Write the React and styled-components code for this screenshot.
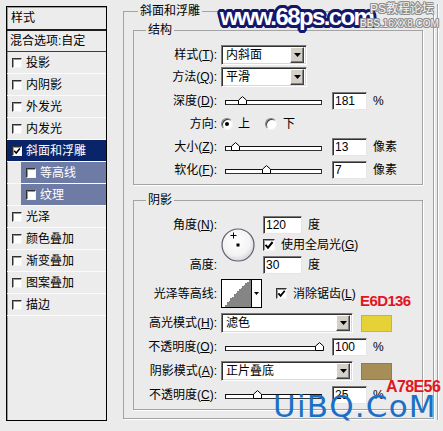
import React from 'react';
import styled, { createGlobalStyle } from 'styled-components';

const FONT = `"Liberation Sans", "Noto Sans CJK SC", sans-serif`;
const BG = '#ebebeb';

const ring = (r, color, steps = 16) =>
  Array.from({ length: steps }, (_, i) => {
    const a = (i / steps) * 2 * Math.PI;
    return `${(Math.cos(a) * r).toFixed(2)}px ${(Math.sin(a) * r).toFixed(2)}px 0 ${color}`;
  }).join(', ');

const GlobalStyle = createGlobalStyle`
  html, body { margin: 0; padding: 0; background: ${BG}; }
  body { font-family: ${FONT}; font-size: 12px; color: #000; }
  * { box-sizing: border-box; }
`;

const Page = styled.div`
  position: relative;
  width: 443px;
  height: 431px;
  overflow: hidden;
  background: ${BG};
  display: flex;
  align-items: flex-start;
  padding-left: 6px;
`;

/* ---------- left layer list ---------- */
const LayerList = styled.div`
  margin-top: 6px;
  width: 101px;
  height: 415px;
  border: 1px solid #000;
  box-shadow: inset 1px 1px 0 #9a9a9a;
  background: #ececec;
  display: flex;
  flex-direction: column;
`;

const ListHeader = styled.div`
  height: 24px;
  border-bottom: 2px solid #1e1e1e;
  display: flex;
  align-items: center;
  padding-left: 4px;
  line-height: 14px;
`;

const BlendRow = styled.div`
  height: 21px;
  border-bottom: 1px solid #3c3c3c;
  display: flex;
  align-items: center;
  padding-left: 3px;
  line-height: 14px;
`;

const LayerRow = styled.div`
  height: 22px;
  border-bottom: 1px solid #fbfbfb;
  display: flex;
  padding-left: ${(p) => (p.$sub ? 14 : 0)}px;
`;

const tones = {
  plain: { bg: 'transparent', fg: '#000' },
  selected: { bg: '#0a246a', fg: '#fff' },
  sub: { bg: '#6e7ba5', fg: '#fff' },
};

const RowBody = styled.div`
  flex: 1;
  display: flex;
  align-items: center;
  gap: 4px;
  padding-left: 5px;
  line-height: 14px;
  background: ${(p) => tones[p.$tone].bg};
  color: ${(p) => tones[p.$tone].fg};
`;

const Box = styled.span`
  flex: none;
  width: ${(p) => p.$size}px;
  height: ${(p) => p.$size}px;
  background: #fff;
  border: 1px solid;
  border-color: #303030 #f4f4f4 #f4f4f4 #303030;
  box-shadow: inset 1px 1px 0 #9a9a9a;
  display: flex;
  align-items: center;
  justify-content: center;
`;

const CheckBox = ({ size, checked }) => (
  <Box $size={size}>
    {checked && (
      <svg width={size - 2} height={size - 2} viewBox="0 0 10 10">
        <polyline points="1.5,4.8 4,7.6 8.6,2" fill="none" stroke="#000" strokeWidth="2" />
      </svg>
    )}
  </Box>
);

/* ---------- group boxes ---------- */
const Group = styled.fieldset`
  margin: 0;
  padding: 0;
  min-width: 0;
  border: 1px solid #a3a3a3;
  box-shadow: 1px 1px 0 #fff;
`;

const OuterGroup = styled(Group)`
  margin: 4px 0 0 16px;
  width: 311px;
  flex: none;
`;

const SpacedGroup = styled(Group)`
  margin-top: ${(p) => p.$mt}px;
`;

const Legend = styled.legend`
  padding: 0 2px;
  margin-left: ${(p) => p.$indent}px;
  line-height: 14px;
  font-size: 12px;
  background: ${BG};
`;

const GroupBody = styled.div`
  padding: ${(p) => p.$pad};
`;

const RightRule = styled.div`
  flex: none;
  margin: 4px 0 0 3px;
  width: 1px;
  height: 416px;
  background: #a3a3a3;
  box-shadow: 1px 0 0 #fff;
`;

/* ---------- form rows ---------- */
const FieldRow = styled.div`
  display: grid;
  grid-template-columns: 83px auto;
  column-gap: 4px;
  align-items: center;
  height: ${(p) => p.$h}px;
  margin-top: ${(p) => p.$mt || 0}px;
`;

const Label = styled.div`
  text-align: right;
  white-space: nowrap;
  line-height: 14px;
`;

const Controls = styled.div`
  display: flex;
  align-items: center;
  line-height: 14px;
  white-space: nowrap;
`;

const SelectBox = styled.div`
  width: ${(p) => p.$w}px;
  height: 20px;
  display: flex;
  align-items: center;
  justify-content: space-between;
  background: #fff;
  border: 1px solid;
  border-color: #7a7a7a #fff #fff #7a7a7a;
  box-shadow: inset 1px 1px 0 #303030, inset -1px -1px 0 #d8d8d8;
  padding: 1px 2px 1px 4px;
  line-height: 14px;
`;

const SelectButton = styled.span`
  width: 14px;
  height: 16px;
  background: #d4d0c8;
  border: 1px solid;
  border-color: #fff #404040 #404040 #fff;
  box-shadow: inset -1px -1px 0 #808080;
  display: flex;
  align-items: center;
  justify-content: center;
`;

const Select = ({ w, value }) => (
  <SelectBox $w={w}>
    <span>{value}</span>
    <SelectButton>
      <svg width="7" height="4" viewBox="0 0 7 4">
        <path d="M0 0h7L3.5 4z" fill="#000" />
      </svg>
    </SelectButton>
  </SelectBox>
);

const SliderWrap = styled.div`
  width: 105px;
  padding: 0 4px;
  flex: none;
`;

const Track = styled.div`
  position: relative;
  height: 5px;
  margin-top: 3px;
  border: 1px solid;
  border-color: #111 #333 #333 #111;
  background: #fff;
`;

const Thumb = styled.svg`
  position: absolute;
  top: -5px;
  width: 9px;
  height: 9px;
`;

const Slider = ({ pct }) => (
  <SliderWrap>
    <Track>
      <Thumb viewBox="0 0 9 9" style={{ left: `calc(${pct}% - 5px)` }}>
        <path d="M0.5 8.5V4.2L4.5 0.6L8.5 4.2V8.5Z" fill="#fff" stroke="#000" strokeWidth="1" />
      </Thumb>
    </Track>
  </SliderWrap>
);

const NumBox = styled.div`
  width: ${(p) => p.$w || 35}px;
  height: 18px;
  margin-left: ${(p) => (p.$ml === undefined ? 6 : p.$ml)}px;
  background: #fff;
  border: 1px solid;
  border-color: #7a7a7a #e6e6e6 #e6e6e6 #7a7a7a;
  box-shadow: inset 1px 1px 0 #303030;
  padding-left: 2px;
  line-height: 16px;
`;

const Unit = styled.span`
  margin-left: 6px;
`;

const RadioDot = styled.span`
  flex: none;
  width: 12px;
  height: 12px;
  border-radius: 50%;
  background: #fff;
  border: 1px solid;
  border-color: #808080 #f4f4f4 #f4f4f4 #808080;
  box-shadow: inset 1px 1px 0 #404040;
  display: flex;
  align-items: center;
  justify-content: center;
  margin-left: ${(p) => p.$ml || 0}px;
  &::after {
    content: '';
    width: 4px;
    height: 4px;
    border-radius: 50%;
    background: ${(p) => (p.$on ? '#000' : 'transparent')};
  }
`;

const OptText = styled.span`
  margin-left: ${(p) => p.$ml}px;
`;

const Swatch = styled.div`
  width: 31px;
  height: 17px;
  margin-left: 8px;
  background: ${(p) => p.$color};
  border: 1px solid rgba(0, 0, 0, 0.12);
`;

/* shadow angle block */
const AngleGrid = styled.div`
  display: grid;
  grid-template-columns: 83px 38px auto;
  grid-template-rows: repeat(3, 18px);
  column-gap: 4px;
  row-gap: 2px;
  align-items: center;
`;

const Cell = styled.div`
  grid-column: ${(p) => p.$col};
  grid-row: ${(p) => p.$row};
  display: flex;
  align-items: center;
  justify-content: ${(p) => (p.$right ? 'flex-end' : 'flex-start')};
  line-height: 14px;
  white-space: nowrap;
`;

const Contour = styled.div`
  width: 41px;
  height: 29px;
  border: 1px solid #000;
  background: #fff;
  display: flex;
`;

const ContourArrow = styled.div`
  width: 10px;
  border-left: 1px solid #000;
  display: flex;
  align-items: center;
  justify-content: center;
`;

/* overlays (watermarks / annotations drawn over the capture) */
const SiteMark = styled.div`
  position: absolute;
  left: 220px;
  top: 5px;
  font: bold 24px/24px "Liberation Sans", sans-serif;
  letter-spacing: -1.6px;
  color: #fff;
  text-shadow: ${ring(1.5, '#15176b')}, ${ring(2.8, '#15176b')};
`;

const ForumMark = styled.div`
  position: absolute;
  left: ${(p) => p.$x}px;
  top: ${(p) => p.$y}px;
  font-size: ${(p) => p.$size}px;
  line-height: 1.15;
  font-family: ${FONT};
  color: #f4f4f4;
  text-shadow: ${ring(1, '#8d8d8d', 8)};
  white-space: nowrap;
`;

const HexNote = styled.div`
  position: absolute;
  left: ${(p) => p.$x}px;
  top: ${(p) => p.$y}px;
  font: bold ${(p) => p.$size}px/1 "Liberation Sans", sans-serif;
  letter-spacing: -0.6px;
  color: #e2151f;
`;

const BlueMark = styled.div`
  position: absolute;
  left: 273px;
  top: 391px;
  font: 31px/1 "DejaVu Sans", sans-serif;
  letter-spacing: 1.2px;
  color: #1c6fc6;
`;

const layers = [
  { name: '投影' },
  { name: '内阴影' },
  { name: '外发光' },
  { name: '内发光' },
  { name: '斜面和浮雕', checked: true, tone: 'selected' },
  { name: '等高线', sub: true, tone: 'sub' },
  { name: '纹理', sub: true, tone: 'sub' },
  { name: '光泽' },
  { name: '颜色叠加' },
  { name: '渐变叠加' },
  { name: '图案叠加' },
  { name: '描边' },
];

export default function App() {
  return (
    <>
      <GlobalStyle />
      <Page>
        <LayerList>
          <ListHeader>样式</ListHeader>
          <BlendRow>混合选项:自定</BlendRow>
          {layers.map((l) => (
            <LayerRow key={l.name} $sub={l.sub}>
              <RowBody $tone={l.tone || 'plain'}>
                <CheckBox size={10} checked={l.checked} />
                <span>{l.name}</span>
              </RowBody>
            </LayerRow>
          ))}
        </LayerList>

        <OuterGroup>
          <Legend $indent={14}>斜面和浮雕</Legend>
          <GroupBody $pad="5px 10px 8px 9px">
            <Group>
              <Legend $indent={12}>结构</Legend>
              <GroupBody $pad="8px 0 3px 0">
                <FieldRow $h={20}>
                  <Label>样式(<u>T</u>):</Label>
                  <Controls><Select w={86} value="内斜面" /></Controls>
                </FieldRow>
                <FieldRow $h={20} $mt={2}>
                  <Label>方法(<u>Q</u>):</Label>
                  <Controls><Select w={86} value="平滑" /></Controls>
                </FieldRow>
                <FieldRow $h={23} $mt={2}>
                  <Label>深度(<u>D</u>):</Label>
                  <Controls>
                    <Slider pct={17.5} />
                    <NumBox>181</NumBox>
                    <Unit>%</Unit>
                  </Controls>
                </FieldRow>
                <FieldRow $h={23}>
                  <Label>方向:</Label>
                  <Controls>
                    <RadioDot $on />
                    <OptText $ml={5}>上</OptText>
                    <RadioDot $ml={15} />
                    <OptText $ml={6}>下</OptText>
                  </Controls>
                </FieldRow>
                <FieldRow $h={23}>
                  <Label>大小(<u>Z</u>):</Label>
                  <Controls>
                    <Slider pct={10.5} />
                    <NumBox>13</NumBox>
                    <Unit>像素</Unit>
                  </Controls>
                </FieldRow>
                <FieldRow $h={23}>
                  <Label>软化(<u>F</u>):</Label>
                  <Controls>
                    <Slider pct={43} />
                    <NumBox>7</NumBox>
                    <Unit>像素</Unit>
                  </Controls>
                </FieldRow>
              </GroupBody>
            </Group>

            <SpacedGroup $mt={8}>
              <Legend $indent={12}>阴影</Legend>
              <GroupBody $pad="9px 0 4px 0">
                <AngleGrid>
                  <Cell $col={1} $row={1} $right>角度(<u>N</u>):</Cell>
                  <Cell $col={2} $row="1 / 4">
                    <svg width="34" height="34" viewBox="0 0 34 34">
                      <defs>
                        <radialGradient id="dial" cx="45%" cy="40%" r="60%">
                          <stop offset="0" stopColor="#ffffff" />
                          <stop offset="0.7" stopColor="#f3f3f3" />
                          <stop offset="1" stopColor="#d6d6dc" />
                        </radialGradient>
                      </defs>
                      <circle cx="17" cy="17" r="16" fill="url(#dial)" stroke="#5b5f6e" strokeWidth="1.2" />
                      <path d="M9.5 7.5h6M12.5 4.5v6" stroke="#000" strokeWidth="1" />
                      <rect x="15.5" y="15.5" width="3" height="3" fill="#000" />
                    </svg>
                  </Cell>
                  <Cell $col={3} $row={1}>
                    <NumBox $w={39} $ml={0}>120</NumBox>
                    <Unit>度</Unit>
                  </Cell>
                  <Cell $col={3} $row={2}>
                    <CheckBox size={12} checked />
                    <OptText $ml={6}>使用全局光(<u>G</u>)</OptText>
                  </Cell>
                  <Cell $col={1} $row={3} $right>高度:</Cell>
                  <Cell $col={3} $row={3}>
                    <NumBox $w={39} $ml={0}>30</NumBox>
                    <Unit>度</Unit>
                  </Cell>
                </AngleGrid>

                <FieldRow $h={29} $mt={5}>
                  <Label>光泽等高线:</Label>
                  <Controls>
                    <Contour>
                      <svg width="29" height="27" viewBox="0 0 29 27">
                        <path
                          d="M3 27V25H5V22H7V21H8V18H10V17H12V14H14V13H15V11H17V9H19V8H20V6H22V5H23V3H25V2H27V0H29V27Z"
                          fill="#858585"
                        />
                      </svg>
                      <ContourArrow>
                        <svg width="5" height="3" viewBox="0 0 5 3">
                          <path d="M0 0h5L2.5 3z" fill="#000" />
                        </svg>
                      </ContourArrow>
                    </Contour>
                    <OptText $ml={14}><CheckBox size={11} checked /></OptText>
                    <OptText $ml={6}>消除锯齿(<u>L</u>)</OptText>
                  </Controls>
                </FieldRow>

                <FieldRow $h={20} $mt={5}>
                  <Label>高光模式(<u>H</u>):</Label>
                  <Controls>
                    <Select w={132} value="滤色" />
                    <Swatch $color="#e6d136" />
                  </Controls>
                </FieldRow>
                <FieldRow $h={20} $mt={4}>
                  <Label>不透明度(<u>O</u>):</Label>
                  <Controls>
                    <Slider pct={99} />
                    <NumBox>100</NumBox>
                    <Unit>%</Unit>
                  </Controls>
                </FieldRow>
                <FieldRow $h={20} $mt={4}>
                  <Label>阴影模式(<u>A</u>):</Label>
                  <Controls>
                    <Select w={132} value="正片叠底" />
                    <Swatch $color="#a78e56" />
                  </Controls>
                </FieldRow>
                <FieldRow $h={20} $mt={4}>
                  <Label>不透明度(<u>C</u>):</Label>
                  <Controls>
                    <Slider pct={34} />
                    <NumBox>25</NumBox>
                    <Unit>%</Unit>
                  </Controls>
                </FieldRow>
              </GroupBody>
            </SpacedGroup>
          </GroupBody>
        </OuterGroup>
        <RightRule />

        <SiteMark>www.68ps.com</SiteMark>
        <ForumMark $x={370} $y={3} $size={12}>PS教程论坛</ForumMark>
        <ForumMark $x={360} $y={18} $size={10}>BBS.16XX8.COM</ForumMark>
        <HexNote $x={360} $y={293} $size={15}>E6D136</HexNote>
        <HexNote $x={386} $y={379} $size={16}>A78E56</HexNote>
        <BlueMark>UiBQ.CoM</BlueMark>
      </Page>
    </>
  );
}
